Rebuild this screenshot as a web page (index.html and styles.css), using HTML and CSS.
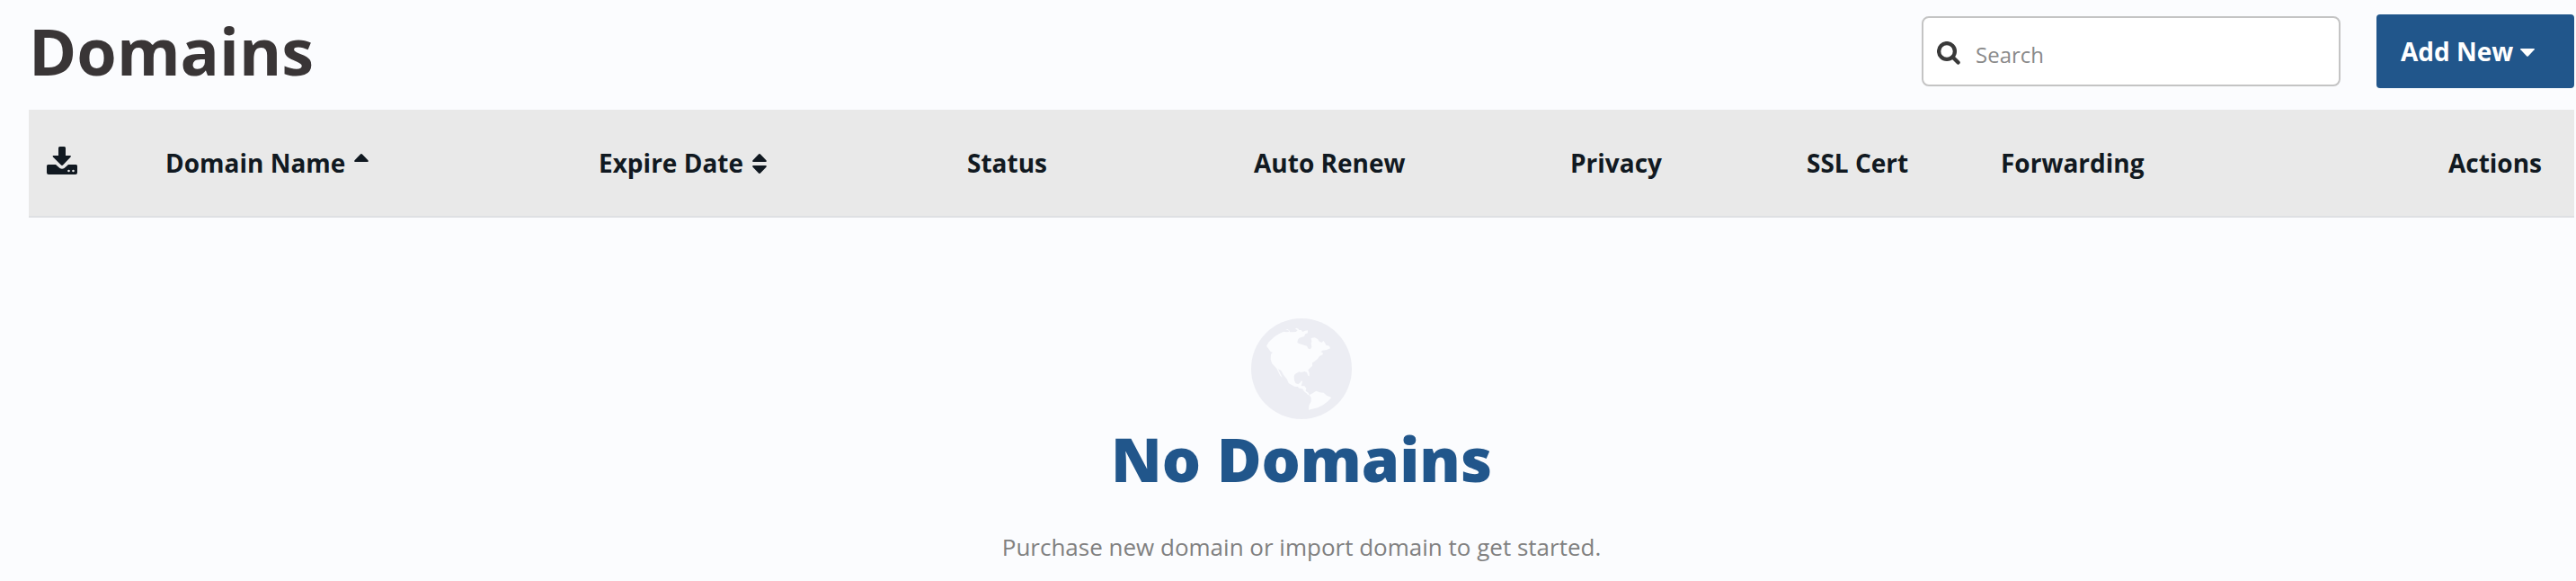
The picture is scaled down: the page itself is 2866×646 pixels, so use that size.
FILE: index.html
```html
<!DOCTYPE html>
<html lang="en">
<head>
	<meta charset="UTF-8">
	<meta name="viewport" content="width=device-width, initial-scale=1.0">
	<title>Domains</title>
	<link rel="stylesheet" href="styles.css">
</head>
<body>
	<div class="page">
		<header class="page-header">
			<h1 class="page-title">Domains</h1>
			<div class="page-actions">
				<label class="search-box">
					<svg class="search-icon" viewBox="0 0 26 26"><circle cx="11" cy="11" r="8.900"/><path d="M17.500 17.500L23.600 23.600"/></svg>
					<input class="search-input" type="text" placeholder="Search">
				</label>
				<button class="add-btn" type="button">Add New<svg class="caret" viewBox="0 0 16 9"><path d="M0.600 0H15.400Q16.300 0.200 15.600 1.300L9 8.300Q8 9.300 7 8.300L0.400 1.300Q-0.300 0.200 0.600 0z"/></svg></button>
			</div>
		</header>
		<table class="domain-table">
			<thead>
				<tr>
					<th class="col-download">
						<svg class="download-icon" viewBox="0 0 34 31"><path d="M14.500 0h5q1.500 0 1.500 1.500V10h5.200q1.300 0.300 0.400 1.500L18.300 20.300q-1.300 1.300-2.600 0L6.900 11.500Q6 10.300 7.300 10H13V1.500Q13 0 14.500 0z"/><path d="M1.500 20H10l4.500 4q2.500 1.600 5 0l4.500-4h8.500Q34 20 34 21.500V29q0 2-2 2H2q-2 0-2-2V21.500Q0 20 1.500 20zM24.500 25.700a1.300 1.300 0 1 0 0 2.600 1.300 1.300 0 1 0 0-2.600zM29.500 25.700a1.300 1.300 0 1 0 0 2.600 1.300 1.300 0 1 0 0-2.600z"/></svg>
					</th>
					<th class="col-name">Domain Name<svg class="sort-icon" viewBox="0 0 16 22"><path d="M8 0Q8.700 0 9.500 1L15.500 7.300Q16.300 9 15 9H1Q-0.300 9 0.500 7.300L6.500 1Q7.300 0 8 0z"/></svg></th>
					<th class="col-expire">Expire Date<svg class="sort-icon" viewBox="0 0 16 22"><path d="M8 0Q8.700 0 9.500 1L15.500 7.300Q16.300 9 15 9H1Q-0.300 9 0.500 7.300L6.500 1Q7.300 0 8 0z"/><path d="M8 22Q8.700 22 9.500 21L15.500 14.700Q16.300 13 15 13H1Q-0.300 13 0.500 14.700L6.500 21Q7.300 22 8 22z"/></svg></th>
					<th class="col-status">Status</th>
					<th class="col-renew">Auto Renew</th>
					<th class="col-privacy">Privacy</th>
					<th class="col-ssl">SSL Cert</th>
					<th class="col-forwarding">Forwarding</th>
					<th class="col-actions">Actions</th>
				</tr>
			</thead>
		</table>
		<section class="empty">
			<svg class="globe-icon" viewBox="96 71 336 336">
				<circle class="globe-sea" cx="264" cy="239" r="168"/>
				<!-- north america -->
				<path class="globe-land" d="M147 163L155 150 175 131 190 122 205 115 212 117 222 116 221 111 211 109 218 107 224 112 225 117 234 117 246 116 251 110 243 106 247 103 254 106 256 110 263 110 268 116 276 112 285 111 285 120 277 123 273 131 257 136 252 142 250 152 258 156 272 160 282 163 287 172 294 174 298 166 296 155 298 149 296 137 308 135 318 140 324 149 332 151 337 146 342 152 346 160 357 163 360 171 348 176 334 178 323 187 329 183 335 186 335 192 325 196 318 206 306 216 300 219 300 230 293 236 286 243 290 253 290 264 286 262 282 251 274 248 262 251 256 249 242 257 239 264 240 277 244 287 253 291 260 285 262 280 268 280 265 289 263 296 274 297 280 304 278 313 287 319 290 325 286 327 280 320 273 315 267 306 257 304 251 299 240 298 221 287 216 275 204 259 196 245 186 240 200 268 193 262 181 238 166 222 161 208 162 190 168 185 161 182 154 172z"/>
				<!-- south america -->
				<path class="globe-land" d="M290 327L295 324 301 321 313 313 325 318 338 319 348 328 364 335 352 348 336 360 318 369 288 376 289 362 296 348 296 335z"/>
			</svg>
			<h2 class="empty-title">No Domains</h2>
			<p class="empty-text">Purchase new domain or import domain to get started.</p>
		</section>
	</div>
</body>
</html>
```
FILE: styles.css
```css
*{box-sizing: border-box;}
body{
	margin: 0;
	background: #fbfcfe;
	color: #111921;
	font-family: "Open Sans", "Noto Sans", sans-serif;
}
.page{padding: 16px 2px 0 32px;}
.page-header{
	display: flex; height: 106px;
	align-items: flex-start;
	justify-content: space-between;
}
.page-title{
	margin: -9px 0 0; color: #393536;
	font-size: 72px; font-weight: 700; line-height: 98px;
}
.page-actions{display: flex; align-items: flex-start; gap: 40px;}
.search-box{
	display: flex; align-items: center;
	width: 466px; height: 78px; margin-top: 2px; padding-left: 15px;
	background: #fff;
	border: 2px solid #c4c4c4; border-radius: 8px;
}
.search-icon{
	width: 26px; height: 26px; margin-top: 4px;
	fill: none; stroke: #393939; stroke-width: 4.3; stroke-linecap: round;
}
.search-input{
	flex: 1; min-width: 0; margin: 6px 0 0 17px; padding: 0;
	border: 0; outline: 0; background: none;
	font: 400 24px "Open Sans", sans-serif;
}
.search-input::placeholder{color: #8a8a8a; opacity: 1;}
.add-btn{
	display: flex; align-items: center;
	width: 220px; height: 82px; padding: 0 0 0 27px;
	border: 0; border-radius: 4px;
	background: #21568b; color: #fff;
	font: 700 28px "Open Sans", sans-serif;
}
.caret{width: 16px; height: 9px; margin: 3px 0 0 8px; fill: #fff;}
/* table */
.domain-table{
	width: 100%; height: 120px;
	table-layout: fixed; border-collapse: separate; border-spacing: 0;
	background: #e9e9e9;
}
.domain-table th{
	padding: 0; border-bottom: 2px solid #dee0e3;
	font-size: 28px; font-weight: 700; line-height: 38px;
	text-align: left; white-space: nowrap;
}
.domain-table .col-download{width: 152px; padding-left: 20px;}
.col-name{width: 482px;}
.col-expire{width: 410px;}
.col-status{width: 319px;}
.col-renew{width: 352px;}
.col-privacy{width: 263px;}
.col-ssl{width: 216px;}
.col-forwarding{width: 300px;}
.domain-table .col-actions{padding-right: 36px; text-align: right;}
.download-icon{display: block; width: 34px; height: 31px; margin-top: -5px; fill: #111921;}
.sort-icon{width: 16px; height: 22px; margin-left: 10px; vertical-align: -1px; fill: #111921;}
/* empty state */
.empty{
	display: flex; flex-direction: column; align-items: center;
	padding-top: 112px;
}
.globe-icon{display: block; width: 112px; height: 112px;}
.globe-sea{fill: #ecedf3;}
.globe-land{fill: #fbfcfe;}
.empty-title{
	margin: -1px 0 0; color: #21568b;
	font-size: 68px; font-weight: 800; line-height: 90px;
}
.empty-text{
	margin: 35px 0 0; color: #808080;
	font-size: 26px; line-height: 36px;
}
```
